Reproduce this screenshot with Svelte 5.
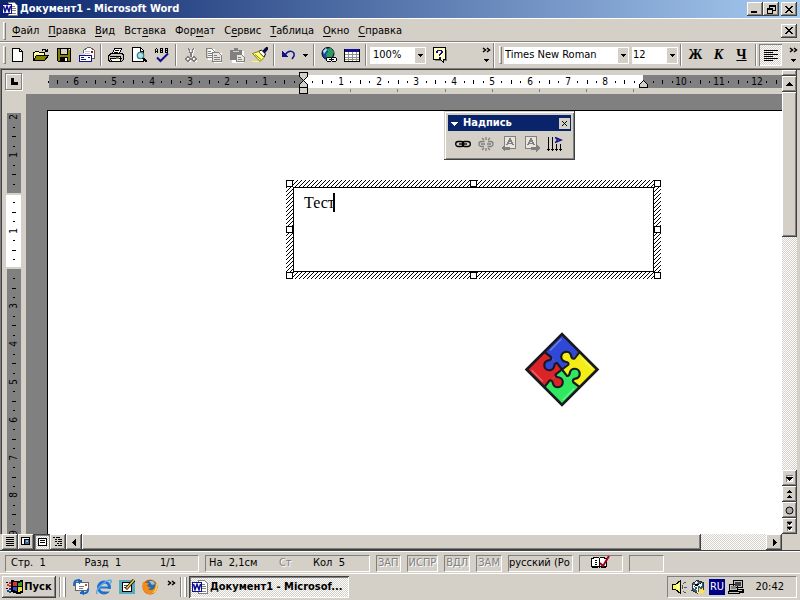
<script>
  const menus = [
    ['', 'Ф', 'айл'], ['', 'П', 'равка'], ['', 'В', 'ид'], ['Вст', 'а', 'вка'], ['Фор', 'м', 'ат'],
    ['С', 'е', 'рвис'], ['', 'Т', 'аблица'], ['', 'О', 'кно'], ['', 'С', 'правка']
  ];

  const icons = {
    word: '<path fill="#fff" stroke="#808080" d="M6.500 1.500h6l3 3v10h-9z"/><path stroke="#808080" d="M8 5.500h5M10 7.500h4M10 9.500h4M8 12.500h6"/><path fill="#fff" stroke="#10108c" d="M.5 3.500h9v9h-9z"/><path fill="none" stroke="#10108c" stroke-width="1.6" shape-rendering="auto" d="M1.5 5l1.500 5.500L5 5.500 7 10.500 8.600 5"/>',
    new: '<path fill="#fff" stroke="#000" d="M2.500 1.500h7l3 3v10h-10z"/><path fill="none" stroke="#000" d="M9.500 1.500v3h3"/>',
    open: '<path fill="#ffff9c" stroke="#000" d="M.5 13.500v-8h1l1-1h3l1 1h5v3"/><path fill="#848200" stroke="#000" d="M.5 13.500l3-5h12l-4 5z"/><path fill="none" stroke="#000" d="M9 3.500l1-1h2l2 2M14.500 2v3M12 4.500h3"/>',
    save: '<path fill="#848200" stroke="#000" d="M1.500 1.500h13v13h-12l-1-1z"/><path fill="#d4d0c8" stroke="#000" d="M4.500 1.500h7v6h-7z"/><path d="M4 10h8v5H4z"/><path fill="#fff" d="M9 11h2v3H9z"/><path fill="#fff" d="M13 2h1v1h-1z"/>',
    mail: '<path fill="#fff" stroke="#636163" d="M4.500 6V3.500l4-3h3l4 3v8h-5"/><path fill="none" stroke="#c6c3c6" d="M6 4.500h5M6 6.500h5"/><path fill="#c00" d="M12 4h2v2h-2z"/><path fill="#fff" stroke="#10108c" d="M.5 8.500h12v6H.5z"/><path stroke="#10108c" d="M2 10.500h3M2 12.500h5M9 10.500h2"/>',
    print: '<path fill="#fff" stroke="#000" d="M4.500 6.500l2-5h7l-2 5z"/><path stroke="#000" d="M7 3.500h4M6 5.500h4"/><path fill="#c6c3c6" stroke="#000" d="M1.500 7.500l2-1h10l2 1v5l-2 2h-11l-2-1v-4z"/><path fill="#fff" stroke="#000" d="M1.500 9.500h11v2H2.500l1 3h8l2-3"/><path stroke="#848200" stroke-width="2" d="M8 11h3"/>',
    preview: '<path fill="#fff" stroke="#000" d="M1.500.5h8l3 3v11h-11z"/><path fill="none" stroke="#000" d="M9.500 1v3h3"/><circle cx="9.500" cy="8.500" r="3.200" fill="#9ce8ef" stroke="#527984" stroke-width="1.300" shape-rendering="auto"/><path stroke="#000" stroke-width="2" d="M12 11l3.500 4"/>',
    spell: '<path fill="none" stroke="#000" d="M1.500 6V2.500l1-1 1 1V6M1.500 4.500h2M6.500 6V1.500h2v4H6.500M6.500 3.500h2M11.500 6V1.500h2v4h-2M11.500 3.500h2"/><path fill="none" stroke="#10108c" stroke-width="2" shape-rendering="auto" d="M3 10.500l3.500 3.500L14 6.500"/>',
    cut: '<g fill="none" stroke="#fff" transform="translate(1 1)"><path d="M5.500 1l3 8M10.500 1l-3 8"/><circle cx="5" cy="12" r="2"/><circle cx="11" cy="12" r="2"/></g><g fill="none" stroke="#808080" stroke-width="1.300"><path d="M5.500 1l3 9M10.500 1l-3 9"/><circle cx="5" cy="12" r="2"/><circle cx="11" cy="12" r="2"/></g>',
    copy: '<path fill="#fff" d="M2 2h7v11H2zM8 6h8v10H8z"/><path fill="none" stroke="#808080" d="M.5 1.500h5l3 3v6h-8zM2 4.500h3M2 6.500h5M2 8.500h5"/><path fill="#e8e5df" stroke="#808080" d="M6.500 5.500h6l3 3v6h-9zM8 8.500h3M8 10.500h6M8 12.500h6"/>',
    paste: '<path fill="#fff" d="M3 4h12v12H3z"/><path fill="#808080" d="M1 3h4V1h4v2h4v10H1z"/><path stroke="#d4d0c8" d="M4 4.500h6"/><path fill="#e8e5df" stroke="#808080" d="M7.500 7.500h5l3 3v4h-8zM9 10.500h3M9 12.500h4"/>',
    brush: '<g shape-rendering="auto"><path fill="#000084" stroke="#000" d="M11 4l3-3.500h1.500v2L12.500 6z"/><path fill="#fff" stroke="#000" d="M6.500 4.500l3-1.500 4 4-1.500 3z"/><path fill="#ffff84" stroke="#848200" d="M.5 6.500l6-2 5.500 6-4 4z"/><path stroke="#848200" d="M3 7.500l6 5"/></g><path stroke="#ffff42" d="M0 14.500h7"/>',
    undo: '<path fill="none" stroke="#10108c" stroke-width="1.500" shape-rendering="auto" d="M4 8C8 2 14 4 13 9l-2 3"/><path fill="#10108c" d="M1 4v6h6z"/>',
    web: '<g shape-rendering="auto"><circle cx="7" cy="6.500" r="6" fill="#124a9c" stroke="#000"/><path fill="#2a9c5b" d="M6 2l4-1 3 4-2 5-5 1-1-4 2-2z"/><path fill="#b6e2ff" d="M2 4l3-3 1 2-3 4z"/></g><rect x="5.500" y="10.500" width="5" height="4" rx="2" fill="#fff" stroke="#000"/><rect x="10.500" y="10.500" width="5" height="4" rx="2" fill="#fff" stroke="#000"/><path stroke="#000" d="M8 12.500h5"/>',
    table: '<path fill="#fff" stroke="#000" d="M.5 2.500h15v12H.5z"/><path fill="#10108c" d="M1 2h14v3H1z"/><path stroke="#94928c" d="M1 7.500h14M1 10.500h14M1 12.500h14M4.500 5v9M8.500 5v9M12.500 5v9"/>',
    help: '<path fill="#808080" d="M3 13h11V3h1v11H3z"/><path fill="#ffffc0" stroke="#000" d="M1.500.5h12v12h-2v3l-3-3h-7z"/><path fill="#10108c" d="M5 3h5v1h1v2h-1v1H9v1H8v1H7V7h1V6h1V4H6v2H4V4h1zM7 10h2v2H7z"/>',
    align: '<path stroke="#000" d="M1 3.500h14M1 5.500h9M1 7.500h14M1 9.500h9M1 11.500h14M1 13.500h9"/>',
    chain: '<g fill="none" stroke="#000" stroke-width="1.300" shape-rendering="auto"><rect x=".7" y="5.500" width="8" height="5" rx="2.500"/><rect x="7.300" y="5.500" width="8" height="5" rx="2.500"/><path d="M4 8h8"/></g>',
    unchain: '<g fill="none" stroke="#808080" stroke-width="1.300" shape-rendering="auto"><path d="M6.500 5.500H3.500a2.500 2.500 0 0 0 0 5H6M10 5.500h2.500a2.500 2.500 0 0 1 0 5H9.500M3 8h4M9 8h4M8 1v3M4 2l2 2M12 2l-2 2M8 12v3M4 14l2-2M12 14l-2-2"/></g>',
    prev: '<path stroke="#808080" fill="#e8e5df" d="M3.500.5h11v12h-11z"/><path fill="none" stroke="#808080" stroke-width="1.500" d="M6 9l3-6 3 6M7 7.500h4"/><path fill="#808080" d="M0 12l4-4v3h5v3H4v2z"/>',
    next: '<path stroke="#808080" fill="#e8e5df" d="M1.500.5h11v12h-11z"/><path fill="none" stroke="#808080" stroke-width="1.500" d="M4 9l3-6 3 6M5 7.500h4"/><path fill="#808080" d="M16 12l-4-4v3H7v3h5v2z"/>',
    direction: '<path fill="none" stroke="#000" d="M1.500 1v13M5.500 1v13M9.500 8v6M13.500 8v6M0 13.500h3M4 13.500h3M8 13.500h3M12 13.500h3M1 14.500h1M5 14.500h1M9 14.500h1M13 14.500h1"/><path fill="none" stroke="#10108c" stroke-width="1.500" shape-rendering="auto" d="M8 1.500l6 2.500-6 2.500M10 2v4"/>',
    outlook: '<path fill="#fff" stroke="#666" d="M2.500 3.500h13v8h-13z"/><path fill="#c44" d="M12 5h2v2h-2z"/><path stroke="#777" d="M6 7.500h5M6 9.500h4"/><path fill="none" stroke="#166ac5" stroke-width="2" shape-rendering="auto" d="M7 1C1 1 1 3 1 7M9 14.500c6 0 6-2 6-5"/><path fill="#166ac5" d="M5 0l5 2-4 3zM11 11l-5 3 5 2z"/>',
    ie: '<g shape-rendering="auto"><circle cx="8" cy="8.500" r="5.500" fill="none" stroke="#2170ce" stroke-width="3"/><path fill="#d4d0c8" d="M9 10h7v2.500H9z"/><path stroke="#2170ce" stroke-width="2" d="M4 8.500h10"/><path fill="none" stroke="#58a9ed" stroke-width="1.500" d="M1 15C-1 10 11 0 15 1.500c1 .5 0 2-1 3"/></g>',
    desktop: '<path fill="#59a9bd" d="M0 1h16v14H0z"/><path fill="#fff" stroke="#000" d="M3.500 3.500h9v9h-9z"/><path stroke="#555" d="M5 6.500h4M5 8.500h3"/><g shape-rendering="auto"><path stroke="#000" stroke-width="3" d="M7 10l8-9"/><path stroke="#f4c23c" stroke-width="1.800" d="M7.500 9.500L15 1"/></g>',
    firefox: '<g shape-rendering="auto"><circle cx="8" cy="8" r="7.500" fill="#d85b12"/><circle cx="8.500" cy="6.500" r="5" fill="#266da8"/><path fill="#8bc8e5" d="M7 2l4 0 2 3-3 1z"/><path fill="#f28b17" d="M1 3l3 1 3 0-2 3 4 2-3 1c2 2 6 1 7-2l1-5c3 5 1 12-6 12C2 15-1 9 1 3z"/><path fill="#ffd34c" d="M14 4c3 5 0 10-4 10 3-2 4-5 4-10z"/></g>',
    speaker: '<path fill="#ffff42" stroke="#000" d="M1.500 5.500h3l5-4v13l-5-4h-3z"/><path fill="#fff" d="M6 5h2v5H6z"/><path fill="none" stroke="#555" d="M11.500 6v4M13 8.500h3M12.500 4.500l3-2M12.500 12.500l3 2"/>',
    cube: '<path fill="#365b76" stroke="#26343e" d="M2.500 4.500L7 1.500l6 2v8l-5 3-6-3z"/><path fill="#e6f5ff" d="M4 4l3-2 1 2-2 1zM9 6l3-2v3l-2 1zM3 7l2 1v2L3 9zM6 10h2v3z"/><path stroke="#fff" d="M3 6l4 2 5-4M7.500 8v6"/><path fill="#ffe44c" d="M9 9l2 1 2-2v3l2 1-2 1v2l-2-1-3 1 1-3z"/>',
    network: '<path fill="#c6c3c6" stroke="#000" d="M5.500 1.500h9v7h-9zM8.500 10.500h5M1.500 5.500h8v6h-8zM.5 12.500h11v2H.5z"/><path fill="#424142" d="M7 3h6v4H7z"/><path fill="#848284" d="M3 7h5v3H3z"/><path stroke="#000" stroke-width="2" d="M12 13h3v-3"/>',
    book: '<path fill="#fff" stroke="#000" d="M.5 3.500h2v-1h5l1 1 1-1h4v1h2v8h-6l-1 1-1-1h-7zM8.500 3.500v8"/><path stroke="#000" d="M1 12.500h6M10 12.500h5M4 5.500h2M4 7.500h2M4 9.500h2"/><path fill="none" stroke="#a00018" stroke-width="2" shape-rendering="auto" d="M9 8l3 3 6-10"/>',
    windows: '<path fill="#000" d="M5 1l5 1 7-1v13l-5 1-7-2z"/><path fill="#e13030" d="M7 3l4 0v4H7z"/><path fill="#28a428" d="M12 4l4-1v4h-4z"/><path fill="#2d55dc" d="M7 8h4v4L7 11z"/><path fill="#f5df29" d="M12 8h4v4l-4 1z"/><path stroke="#000" d="M0 3.500h2M0 9.500h2"/><path stroke="#d33" stroke-width="2" d="M1 6h2M3 4h2M3 7h2"/><path stroke="#248" stroke-width="2" d="M1 12h2M3 10h2M3 13h2"/>',
    normal: '<path stroke="#000" d="M4 3.500h8M4 5.500h8M4 7.500h8M4 9.500h8M4 11.500h8"/>',
    webview: '<path fill="#fff" stroke="#000" d="M3.500 3.500h8v7h-8z"/><circle cx="9" cy="8" r="3" fill="#416095" stroke="#000"/><path fill="#8bd" d="M8 6h2v2H8z"/>',
    printview: '<path fill="#fff" stroke="#000" d="M4.500 4.500h8v7h-8zM6 6.500h5M6 8.500h5"/>',
    outline: '<path stroke="#000" d="M3 3.500h2M6 3.500h4M5 5.500h2M8 5.500h4M5 7.500h2M8 7.500h4M7 9.500h2M10 9.500h2M5 11.500h2M8 11.500h4"/>'
  };

  const standard = [
    ['new', 'Создать'], ['open', 'Открыть'], ['save', 'Сохранить'], ['mail', 'Сообщение'], null,
    ['print', 'Печать'], ['preview', 'Предварительный просмотр'], ['spell', 'Правописание'], null,
    ['cut', 'Вырезать'], ['copy', 'Копировать'], ['paste', 'Вставить'], ['brush', 'Формат по образцу'], null,
    ['undo', 'Отменить']
  ];
  const views = [['normal', 'Обычный режим'], ['webview', 'Веб-документ'], ['printview', 'Разметка страницы'], ['outline', 'Структура']];
  const boxTools = [['chain', 'Создать связь'], ['unchain', 'Разорвать связь'], ['prev', 'Предыдущая надпись'], ['next', 'Следующая надпись'], ['direction', 'Направление текста']];
  const quick = [['outlook', 'Почта'], ['ie', 'Обозреватель'], ['desktop', 'Рабочий стол'], ['firefox', 'Firefox']];
  const modes = ['ЗАП', 'ИСПР', 'ВДЛ', 'ЗАМ'];

  // A quarter of a centimetre on both rulers; zero sits at the page margin.
  const quarter = 9.45;
  const hZero = 277;
  const vZero = 99;
  let rulerWidth = $state(756);
  let rulerHeight = $state(440);
  const marks = (first, zero, length, skip) =>
    Array.from({ length: Math.max(0, Math.floor((length - 4 - zero) / quarter) - first + 1) }, (_, i) => i + first)
      .filter((q) => q !== 0 && q !== skip);
  let hMarks = $derived(marks(-27, hZero, rulerWidth, 36));
  let vMarks = $derived(marks(-8, vZero, rulerHeight + 4, 8));

  const tabStops = [324, 371, 419, 466, 513, 560, 607];
  const handles = [[0, 0], [184, 0], [368, 0], [0, 46], [368, 46], [0, 92], [184, 92], [368, 92]];
  const pieces = [['#3048d8', 0], ['#f4ee18', 90], ['#30e860', 180], ['#dc2428', 270]];

  let text = $state('Тест');
</script>

{#snippet icon(name, w = 16)}
  <svg width={w} height="16" viewBox="0 0 {w} 16" shape-rendering="crispEdges" aria-hidden="true">{@html icons[name]}</svg>
{/snippet}

{#snippet arrow(dir)}
  <svg class={dir} width="7" height="7" viewBox="0 0 7 7" shape-rendering="crispEdges" aria-hidden="true"><path d="M0 2h7v1H0zM1 3h5v1H1zM2 4h3v1H2zM3 5h1v1H3z" /></svg>
{/snippet}

{#snippet small(dir = '')}
  <svg class={dir} width="5" height="5" viewBox="0 0 5 5" shape-rendering="crispEdges" aria-hidden="true"><path d="M0 1h5v1H0zM1 2h3v1H1zM2 3h1v1H2z" /></svg>
{/snippet}

{#snippet cross()}
  <svg width="8" height="7" viewBox="0 0 8 7" shape-rendering="crispEdges" aria-hidden="true"><path d="M0 0h2v1H0zM6 0h2v1H6zM1 1h2v1H1zM5 1h2v1H5zM2 2h4v1H2zM3 3h2v1H3zM2 4h4v1H2zM1 5h2v1H1zM5 5h2v1H5zM0 6h2v1H0zM6 6h2v1H6z" /></svg>
{/snippet}

{#snippet chevrons()}
  <svg width="9" height="7" viewBox="0 0 9 7" aria-hidden="true"><path fill="none" stroke="#000" stroke-width="1.500" d="M1 1l2.500 2L1 5M5 1l2.500 2L5 5" /></svg>
{/snippet}

{#snippet more()}
  <button class="more" aria-label="Другие кнопки">{@render chevrons()}{@render small()}</button>
{/snippet}

<div class="app">
  <header class="titlebar">
    {@render icon('word')}
    <h1>Документ1 - Microsoft Word</h1>
    <button class="raised ctl" aria-label="Свернуть"><svg width="8" height="8" shape-rendering="crispEdges"><path d="M0 6h6v2H0z" /></svg></button>
    <button class="raised ctl" aria-label="Восстановить"><svg width="9" height="9" viewBox="0 0 9 9" shape-rendering="crispEdges"><path fill="none" stroke="#000" d="M2.500 3V.5h6v5H6M2 1.500h7M.5 3.500h5v5h-5zM0 4.500h6" /></svg></button>
    <button class="raised ctl apart" aria-label="Закрыть">{@render cross()}</button>
  </header>

  <nav class="menubar">
    <span class="grip"></span>
    {#each menus as [a, u, b]}<button class="menu">{a}<u>{u}</u>{b}</button>{/each}
    <button class="raised ctl push" aria-label="Закрыть документ">{@render cross()}</button>
  </nav>

  <div class="toolbars">
    <div class="toolbar grow">
      <span class="grip"></span>
      {#each standard as tool}
        {#if tool}<button class="tool" aria-label={tool[1]}>{@render icon(tool[0])}</button>{:else}<span class="sep"></span>{/if}
      {/each}
      <button class="tool slim" aria-label="Список отмены">{@render small()}</button>
      <span class="sep"></span>
      <button class="tool" aria-label="Гиперссылка">{@render icon('web')}</button>
      <button class="tool" aria-label="Таблица">{@render icon('table')}</button>
      <span class="sep"></span>
      <span class="combo zoom"><select aria-label="Масштаб"><option>100%</option></select><i>{@render small()}</i></span>
      <button class="tool" aria-label="Справка">{@render icon('help')}</button>
      <span class="push">{@render more()}</span>
    </div>
    <div class="toolbar second">
      <span class="grip"></span>
      <span class="combo font"><select aria-label="Шрифт"><option>Times New Roman</option></select><i>{@render small()}</i></span>
      <span class="combo size"><select aria-label="Размер"><option>12</option></select><i>{@render small()}</i></span>
      <span class="sep"></span>
      <button class="tool style">Ж</button>
      <button class="tool style italic">К</button>
      <button class="tool style under">Ч</button>
      <span class="sep"></span>
      <button class="tool pressed" aria-label="По левому краю">{@render icon('align')}</button>
      <span class="push">{@render more()}</span>
    </div>
  </div>

  <main class="work">
    <div class="view">
      <div class="rulerrow">
        <button class="tabkind" aria-label="Вид табуляции"><svg width="9" height="9" shape-rendering="crispEdges"><path d="M2 1h3v4h4v3H2z" /></svg></button>
        <div class="hruler" bind:clientWidth={rulerWidth}>
          <svg width="100%" height="24" shape-rendering="crispEdges">
            <rect x="23" y="5" width="100%" height="13" fill="#808080" />
            <rect x={hZero} y="5" width="340" height="13" fill="#fff" />
            {#each hMarks as q}
              {@const x = Math.round(hZero + q * quarter)}
              {#if q % 4 === 0}<text {x} y="15" text-anchor="middle">{Math.abs(q / 4)}</text>
              {:else if q % 2 === 0}<rect {x} y="10" width="1" height="4" />
              {:else}<rect {x} y="11" width="1" height="2" />{/if}
            {/each}
            {#each tabStops as x}<rect {x} y="19" width="1" height="3" fill="#808080" />{/each}
            <path fill="#d4d0c8" stroke="#000" d="M273.500 2.500h8v4l-4 4-4-4zM273.500 17.500v-3l4-4 4 4v3zM273.500 17.500h8v6h-8zM613.500 17.500v-3l4-4 4 4v3z" />
          </svg>
        </div>
      </div>
      <div class="docrow">
        <div class="vruler" bind:clientHeight={rulerHeight}>
          <svg width="24" height="100%" shape-rendering="crispEdges">
            <rect x="5" y="19" width="14" height="100%" fill="#808080" />
            <rect x="4" y={vZero} width="16" height="2" fill="#d4d0c8" />
            <rect x="4" y="101" width="15" height="72" fill="#fff" />
            <rect x="4" y="173" width="16" height="2" fill="#d4d0c8" />
            {#each vMarks as q}
              {@const y = Math.round(vZero + q * quarter)}
              {#if q % 4 === 0}<text transform="translate(15 {y}) rotate(-90)" text-anchor="middle">{Math.abs(q / 4)}</text>
              {:else if q % 2 === 0}<rect x="10" {y} width="4" height="1" />
              {:else}<rect x="11" {y} width="2" height="1" />{/if}
            {/each}
          </svg>
        </div>
        <div class="canvas">
          <div class="page"></div>

          <section class="floating" aria-label="Надпись">
            <div class="ftitle">{@render arrow('')}<h2>Надпись</h2>
              <button class="fclose" aria-label="Закрыть панель"><svg width="7" height="7" viewBox="0 0 7 7"><path stroke="#000" d="M1 1l5 5M6 1L1 6" /></svg></button>
            </div>
            <div class="ftools">
              {#each boxTools as [n, t]}<button class="tool" aria-label={t}>{@render icon(n)}</button>{/each}
            </div>
          </section>

          <div class="frame">
            <svg width="375" height="99" shape-rendering="crispEdges" aria-hidden="true">
              <defs><pattern id="hatch" width="4" height="4" patternUnits="userSpaceOnUse"><path d="M0 3h1v1H0zM1 2h1v1H1zM2 1h1v1H2zM3 0h1v1H3z" /></pattern></defs>
              <rect width="375" height="99" fill="url(#hatch)" />
              <rect x="7.500" y="7.500" width="360" height="84" fill="#fff" stroke="#000" />
              {#each handles as [x, y]}<rect x={x + 0.5} y={y + 0.5} width="6" height="6" fill="#fff" stroke="#000" />{/each}
            </svg>
            <textarea bind:value={text} aria-label="Текст надписи" spellcheck="false"></textarea>
            <span class="caret"></span>
          </div>

          <svg class="puzzle" width="76" height="76" viewBox="0 0 76 76" aria-hidden="true">
            <g transform="translate(38 37.500) rotate(45)" stroke="#181820">
              <path fill="#3048d8" stroke="none" d="M-25-25H0V0h-25z" />
              <path fill="#f4ee18" stroke="none" d="M0-25h25V0H0z" />
              <path fill="#30e860" stroke="none" d="M0 0h25v25H0z" />
              <path fill="#dc2428" stroke="none" d="M-25 0H0v25h-25z" />
              {#each pieces as [fill, turn]}
                <path transform="rotate({turn})" {fill} stroke-width="2.200" d="M-25 0L-17-1q3 1 1 4a5 5 0 1 0 8 0q-2-3 0-4L0 0" />
              {/each}
              {#each pieces as [, turn]}
                <path transform="rotate({turn})" fill="none" stroke="#fff" stroke-opacity=".3" stroke-width="1.500" d="M-22-5v-16" />
              {/each}
              <rect x="-25" y="-25" width="50" height="50" fill="none" stroke-width="2.800" />
            </g>
          </svg>
        </div>
      </div>
    </div>
    <div class="vscroll">
      <span class="raised split"></span>
      <button class="raised sb" aria-label="Вверх">{@render arrow('up')}</button>
      <span class="raised vthumb"></span>
      <span class="track"></span>
      <button class="raised sb" aria-label="Вниз">{@render arrow('down')}</button>
      <button class="raised sb" aria-label="Предыдущая страница"><span>{@render small('up')}{@render small('up')}</span></button>
      <button class="raised sb" aria-label="Объект перехода"><svg width="9" height="9"><circle cx="4.500" cy="4.500" r="3.500" fill="#aaa" stroke="#000" /></svg></button>
      <button class="raised sb" aria-label="Следующая страница"><span>{@render small('down')}{@render small('down')}</span></button>
    </div>
  </main>

  <div class="hrow">
    {#each views as [n, t]}<button class="raised vb" class:down={n === 'printview'} aria-label={t}>{@render icon(n)}</button>{/each}
    <button class="raised vb" aria-label="Влево">{@render arrow('left')}</button>
    <div class="hscroll"><span class="raised hthumb"></span></div>
    <button class="raised vb" aria-label="Вправо">{@render arrow('right')}</button>
  </div>

  <footer class="status">
    <div class="panel place"><span>Стр.&nbsp; 1</span><span>Разд&nbsp; 1</span><span>1/1</span></div>
    <div class="panel at"><span>На&nbsp; 2,1см</span><span class="off">Ст</span><span>Кол&nbsp; 5</span></div>
    {#each modes as m}<div class="panel mode off">{m}</div>{/each}
    <div class="panel lang">русский (Ро</div>
    <div class="panel book">{@render icon('book', 19)}</div>
    <div class="panel blank"></div>
  </footer>

  <div class="taskbar">
    <button class="raised start">{@render icon('windows', 18)}Пуск</button>
    <span class="divider"></span>
    <div class="quick">{#each quick as [n, t]}<button aria-label={t}>{@render icon(n)}</button>{/each}</div>
    <button class="chev" aria-label="Ещё">{@render chevrons()}</button>
    <span class="divider"></span>
    <button class="task">{@render icon('word')}<span>Документ1 - Microsof...</span></button>
    <div class="tray">
      {@render icon('speaker')}{@render icon('cube')}
      <span class="ru">RU</span>
      {@render icon('network')}
      <time>20:42</time>
    </div>
  </div>
</div>

<style>
  :global(body) { margin: 0; }
  .app {
    display: flex; flex-direction: column; height: 100vh; overflow: hidden;
    background: #d4d0c8; color: #000; font: 11px/14px "DejaVu Sans Condensed", "DejaVu Sans", sans-serif;
  }
  .app :global(*) { box-sizing: border-box; }
  .app :global(svg) { display: block; flex: none; }
  button { font: inherit; color: inherit; background: none; border: 0; padding: 0; margin: 0; display: flex; align-items: center; justify-content: center; flex: none; }
  h1, h2 { font-size: 11px; line-height: 14px; margin: 0; color: #fff; white-space: nowrap; }
  .raised { background: #d4d0c8; box-shadow: inset -1px -1px #404040, inset 1px 1px #fff, inset -2px -2px #808080; }
  .push { margin-left: auto; }

  .titlebar { display: flex; align-items: center; height: 18px; padding: 0 3px 0 2px; background: linear-gradient(90deg, #0a246a, #a6caf0); flex: none; }
  .titlebar h1 { flex: 1; margin-left: 2px; }
  .ctl { width: 16px; height: 14px; }
  .apart { margin-left: 2px; }

  .menubar { display: flex; align-items: center; height: 24px; padding: 1px 3px 0 3px; border-top: 1px solid #fff; border-bottom: 1px solid #808080; flex: none; }
  .menu { padding: 3px 5px 2px 4px; }
  .menu u { text-underline-offset: 2px; }
  .grip { width: 3px; height: 18px; border: 1px solid; border-color: #fff #808080 #808080 #fff; flex: none; }
  .menubar .grip { margin-right: 2px; }

  .toolbars { display: flex; height: 26px; border-top: 1px solid #fff; flex: none; }
  .toolbar { display: flex; align-items: center; padding: 0 0 1px 3px; min-width: 0; }
  .grow { flex: 1; border-right: 1px solid #808080; }
  .second { width: 306px; padding-left: 4px; border-left: 1px solid #fff; flex: none; }
  .tool { width: 23px; height: 22px; }
  .slim { width: 11px; }
  .sep { width: 2px; height: 22px; margin: 0 2px; border-left: 1px solid #808080; border-right: 1px solid #fff; flex: none; }
  .combo { display: grid; height: 17px; background: #fff; border: 1px solid #fff; flex: none; }
  .combo > * { grid-area: 1 / 1; }
  .combo select { appearance: none; border: 0; background: none; padding: 0; margin: 0; font: inherit; width: 100%; }
  .combo i { justify-self: end; width: 10px; background: #d4d0c8; display: grid; place-items: center; pointer-events: none; }
  .zoom { width: 56px; margin: 0 2px 0 1px; }
  .zoom select { padding-left: 2px; }
  .font { width: 125px; margin: 0 3px 0 2px; }
  .size { width: 46px; }
  .style { font: bold 14px/16px "Liberation Serif", serif; }
  .italic { font-style: italic; }
  .under { text-decoration: underline; }
  .pressed, .down { background: repeating-conic-gradient(#fff 0 25%, #d4d0c8 0 50%) 0 0 / 2px 2px; box-shadow: inset 1px 1px #808080, inset -1px -1px #fff; }
  .more { width: 13px; height: 22px; flex-direction: column; justify-content: space-evenly; }

  .work { display: flex; flex: 1; min-height: 0; padding: 2px 3px 0 2px; box-shadow: inset 1px 1px #808080, inset 2px 2px #404040; }
  .view { display: flex; flex-direction: column; flex: 1; min-width: 0; }
  .rulerrow { display: flex; flex: none; }
  .hruler { flex: 1; min-width: 0; }
  .vruler { width: 24px; flex: none; overflow: hidden; }
  .hruler text, .vruler text { font: 10px "DejaVu Sans Condensed", sans-serif; }
  .tabkind { width: 17px; height: 17px; margin: 3px 4px 4px 3px; border: 1px solid #808080; box-shadow: inset 1px 1px #fff, 1px 1px #fff; }
  .docrow { display: flex; flex: 1; min-height: 0; }
  .canvas { position: relative; display: flex; flex: 1; min-width: 0; padding: 16px 0 0 21px; background: #808080; overflow: hidden; }
  .page { flex: 1; background: #fff; border: solid #000; border-width: 1px 0 0 1px; }

  .floating { position: absolute; left: 418px; top: 17px; padding: 4px; background: #d4d0c8; box-shadow: inset -1px -1px #404040, inset 1px 1px #d4d0c8, inset 2px 2px #fff, inset -2px -2px #808080; }
  .ftitle { display: flex; align-items: center; height: 16px; padding: 0 1px 0 3px; background: #0a246a; fill: #fff; }
  .ftitle h2 { flex: 1; margin-left: 5px; }
  .fclose { width: 11px; height: 11px; background: #d4d0c8; }
  .ftools { display: flex; padding: 2px 5px 1px 3px; }
  .frame { position: absolute; left: 260px; top: 86px; width: 375px; height: 99px; }
  .frame textarea { position: absolute; left: 8px; top: 8px; width: 359px; height: 83px; padding: 6px 10px; border: 0; background: none; resize: none; outline: 0; font: 16px/18px "Liberation Serif", serif; }
  .caret { position: absolute; left: 47px; top: 13px; width: 2px; height: 19px; background: #000; }
  .puzzle { position: absolute; left: 498px; top: 238px; }

  .vscroll { display: flex; flex-direction: column; width: 15px; flex: none; }
  .split { height: 6px; }
  .sb { height: 16px; width: 15px; }
  .vthumb { height: 145px; }
  .track { flex: 1; }
  .track, .hscroll { background: repeating-conic-gradient(#fff 0 25%, #d4d0c8 0 50%) 0 0 / 2px 2px; }
  .app :global(.up) { transform: rotate(180deg); }
  .app :global(.left) { transform: rotate(90deg); }
  .app :global(.right) { transform: rotate(-90deg); }

  .hrow { display: flex; height: 16px; padding: 0 18px 0 2px; flex: none; }
  .vb { width: 16px; height: 16px; overflow: hidden; }
  .vb.down { box-shadow: inset 1px 1px #404040, inset 2px 2px #808080, inset -1px -1px #808080; }
  .hscroll { display: flex; flex: 1; }
  .hthumb { width: 90.5%; }

  .status { display: flex; align-items: center; gap: 6px; height: 24px; padding: 2px 5px 0; border-top: 1px solid #404040; border-bottom: 1px solid #fff; box-shadow: inset 0 1px #fff; flex: none; white-space: nowrap; }
  .panel { height: 17px; display: flex; align-items: center; border: 1px solid; border-color: #808080 #fff #fff #808080; flex: none; overflow: hidden; }
  .place { width: 194px; padding: 0 22px 0 5px; justify-content: space-between; }
  .at { width: 165px; padding: 0 24px 0 3px; justify-content: space-between; }
  .off { color: #808080; text-shadow: 1px 1px #fff; }
  .mode { padding: 0 1px; }
  .lang { width: 65px; }
  .book { width: 44px; justify-content: center; }
  .blank { width: 35px; }

  .taskbar { display: flex; align-items: center; height: 26px; padding: 0 3px 0 2px; flex: none; }
  .start { height: 22px; width: 54px; font-weight: bold; }
  .divider { width: 7px; height: 20px; margin: 0 2px 0 3px; border-left: 1px solid #808080; box-shadow: inset 1px 0 #fff, inset -1px 0 #808080, inset -3px 0 #fff; flex: none; }
  .quick { display: flex; gap: 7px; padding-left: 5px; }
  .chev { width: 12px; height: 20px; margin-left: 7px; align-items: flex-start; padding-top: 3px; }
  .task { height: 22px; width: 160px; padding-left: 3px; gap: 2px; justify-content: flex-start; font-weight: bold; white-space: nowrap; background: repeating-conic-gradient(#fff 0 25%, #d4d0c8 0 50%) 0 0 / 2px 2px; box-shadow: inset 1px 1px #404040, inset -1px -1px #fff, inset 2px 2px #808080; }
  .tray { display: flex; align-items: center; gap: 3px; height: 22px; width: 130px; margin-left: auto; padding: 0 12px 0 3px; border: 1px solid; border-color: #808080 #fff #fff #808080; }
  .ru { width: 16px; height: 16px; line-height: 16px; text-align: center; color: #fff; background: #000084; }
  .tray time { margin-left: auto; }
</style>
